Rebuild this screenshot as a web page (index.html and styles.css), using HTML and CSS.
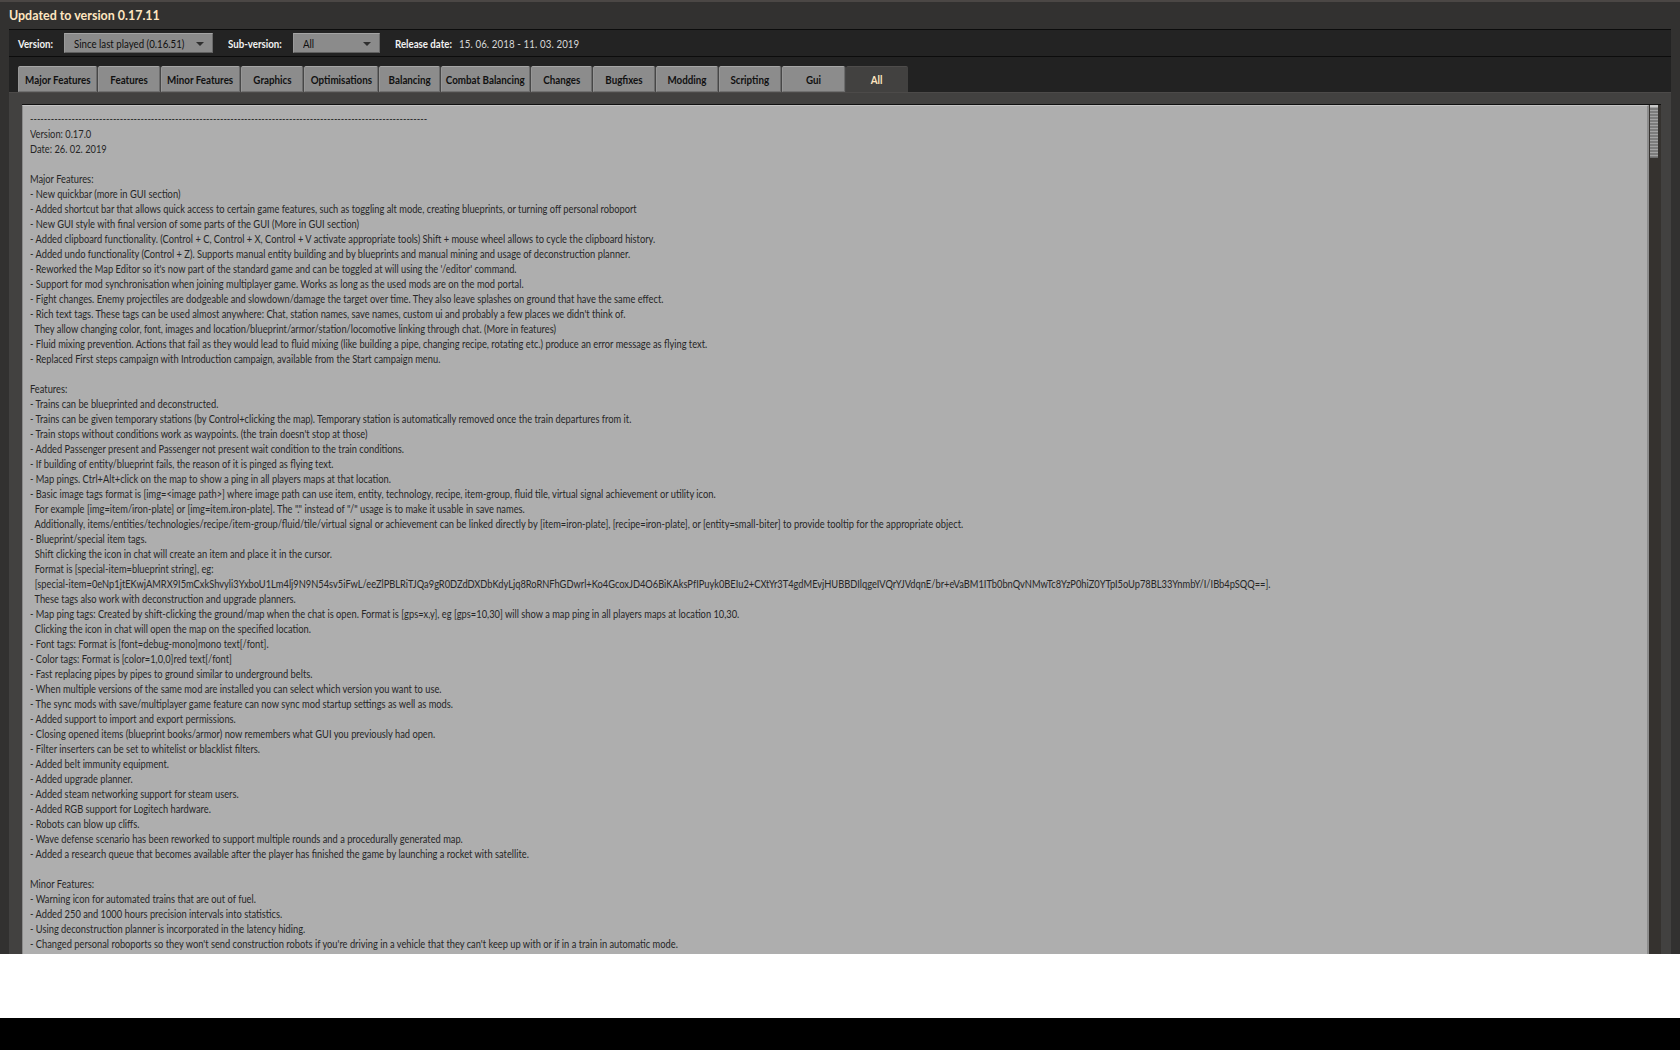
FILE: index.html
```html
<!DOCTYPE html>
<html lang="en">
<head>
<meta charset="utf-8">
<title>Updated to version 0.17.11</title>
<link rel="stylesheet" href="styles.css">
</head>
<body>
<div class="frame">
  <h1 class="title">Updated to version 0.17.11</h1>
  <div class="toolbar">
    <span class="label label-version"><span class="narrow">Version:</span></span>
    <div class="select select-version"><span class="narrow">Since last played (0.16.51)</span><i class="arrow"></i></div>
    <span class="label label-sub"><span class="narrow">Sub-version:</span></span>
    <div class="select select-sub"><span class="narrow">All</span><i class="arrow"></i></div>
    <span class="label label-date"><span class="narrow">Release date:</span></span>
    <span class="date"><span class="narrow">15. 06. 2018 - 11. 03. 2019</span></span>
  </div>
  <div class="tabs">
    <div class="tab"><span class="tab-label">Major Features</span></div>
    <div class="tab"><span class="tab-label">Features</span></div>
    <div class="tab"><span class="tab-label">Minor Features</span></div>
    <div class="tab"><span class="tab-label">Graphics</span></div>
    <div class="tab"><span class="tab-label">Optimisations</span></div>
    <div class="tab"><span class="tab-label">Balancing</span></div>
    <div class="tab"><span class="tab-label">Combat Balancing</span></div>
    <div class="tab"><span class="tab-label">Changes</span></div>
    <div class="tab"><span class="tab-label">Bugfixes</span></div>
    <div class="tab"><span class="tab-label">Modding</span></div>
    <div class="tab"><span class="tab-label">Scripting</span></div>
    <div class="tab"><span class="tab-label">Gui</span></div>
    <div class="tab tab-active"><span class="tab-label">All</span></div>
  </div>
  <div class="panel">
    <div class="textbox">
      <div class="lines">
<p>-------------------------------------------------------------------------------------------------------------------</p>
<p>Version: 0.17.0</p>
<p>Date: 26. 02. 2019</p>
<p>&nbsp;</p>
<p>Major Features:</p>
<p>- New quickbar (more in GUI section)</p>
<p>- Added shortcut bar that allows quick access to certain game features, such as toggling alt mode, creating blueprints, or turning off personal roboport</p>
<p>- New GUI style with final version of some parts of the GUI (More in GUI section)</p>
<p>- Added clipboard functionality. (Control + C, Control + X, Control + V activate appropriate tools) Shift + mouse wheel allows to cycle the clipboard history.</p>
<p>- Added undo functionality (Control + Z). Supports manual entity building and by blueprints and manual mining and usage of deconstruction planner.</p>
<p>- Reworked the Map Editor so it's now part of the standard game and can be toggled at will using the '/editor' command.</p>
<p>- Support for mod synchronisation when joining multiplayer game. Works as long as the used mods are on the mod portal.</p>
<p>- Fight changes. Enemy projectiles are dodgeable and slowdown/damage the target over time. They also leave splashes on ground that have the same effect.</p>
<p>- Rich text tags. These tags can be used almost anywhere: Chat, station names, save names, custom ui and probably a few places we didn't think of.</p>
<p>&nbsp; They allow changing color, font, images and location/blueprint/armor/station/locomotive linking through chat. (More in features)</p>
<p>- Fluid mixing prevention. Actions that fail as they would lead to fluid mixing (like building a pipe, changing recipe, rotating etc.) produce an error message as flying text.</p>
<p>- Replaced First steps campaign with Introduction campaign, available from the Start campaign menu.</p>
<p>&nbsp;</p>
<p>Features:</p>
<p>- Trains can be blueprinted and deconstructed.</p>
<p>- Trains can be given temporary stations (by Control+clicking the map). Temporary station is automatically removed once the train departures from it.</p>
<p>- Train stops without conditions work as waypoints. (the train doesn't stop at those)</p>
<p>- Added Passenger present and Passenger not present wait condition to the train conditions.</p>
<p>- If building of entity/blueprint fails, the reason of it is pinged as flying text.</p>
<p>- Map pings. Ctrl+Alt+click on the map to show a ping in all players maps at that location.</p>
<p>- Basic image tags format is [img=&lt;image path&gt;] where image path can use item, entity, technology, recipe, item-group, fluid tile, virtual signal achievement or utility icon.</p>
<p>&nbsp; For example [img=item/iron-plate] or [img=item.iron-plate]. The "." instead of "/" usage is to make it usable in save names.</p>
<p>&nbsp; Additionally, items/entities/technologies/recipe/item-group/fluid/tile/virtual signal or achievement can be linked directly by [item=iron-plate], [recipe=iron-plate], or [entity=small-biter] to provide tooltip for the appropriate object.</p>
<p>- Blueprint/special item tags.</p>
<p>&nbsp; Shift clicking the icon in chat will create an item and place it in the cursor.</p>
<p>&nbsp; Format is [special-item=blueprint string], eg:</p>
<p>&nbsp; [special-item=0eNp1jtEKwjAMRX9I5mCxkShvyli3YxboU1Lm4lj9N9N54sv5iFwL/eeZlPBLRiTJQa9gR0DZdDXDbKdyLjq8RoRNFhGDwrl+Ko4GcoxJD4O6BiKAksPfIPuyk0BEIu2+CXtYr3T4gdMEvjHUBBDIlqgeIVQrYJVdqnE/br+eVaBM1ITb0bnQvNMwTc8YzP0hiZ0YTpI5oUp78BL33YnmbY/I/IBb4pSQQ==].</p>
<p>&nbsp; These tags also work with deconstruction and upgrade planners.</p>
<p>- Map ping tags: Created by shift-clicking the ground/map when the chat is open. Format is [gps=x,y], eg [gps=10,30] will show a map ping in all players maps at location 10,30.</p>
<p>&nbsp; Clicking the icon in chat will open the map on the specified location.</p>
<p>- Font tags: Format is [font=debug-mono]mono text[/font].</p>
<p>- Color tags: Format is [color=1,0,0]red text[/font]</p>
<p>- Fast replacing pipes by pipes to ground similar to underground belts.</p>
<p>- When multiple versions of the same mod are installed you can select which version you want to use.</p>
<p>- The sync mods with save/multiplayer game feature can now sync mod startup settings as well as mods.</p>
<p>- Added support to import and export permissions.</p>
<p>- Closing opened items (blueprint books/armor) now remembers what GUI you previously had open.</p>
<p>- Filter inserters can be set to whitelist or blacklist filters.</p>
<p>- Added belt immunity equipment.</p>
<p>- Added upgrade planner.</p>
<p>- Added steam networking support for steam users.</p>
<p>- Added RGB support for Logitech hardware.</p>
<p>- Robots can blow up cliffs.</p>
<p>- Wave defense scenario has been reworked to support multiple rounds and a procedurally generated map.</p>
<p>- Added a research queue that becomes available after the player has finished the game by launching a rocket with satellite.</p>
<p>&nbsp;</p>
<p>Minor Features:</p>
<p>- Warning icon for automated trains that are out of fuel.</p>
<p>- Added 250 and 1000 hours precision intervals into statistics.</p>
<p>- Using deconstruction planner is incorporated in the latency hiding.</p>
<p>- Changed personal roboports so they won't send construction robots if you're driving in a vehicle that they can't keep up with or if in a train in automatic mode.</p>
      </div>
    </div>
    <div class="scrollbar"><div class="thumb"></div></div>
  </div>
</div>
<div class="white-strip"></div>
<div class="black-strip"></div>
</body>
</html>
```

FILE: styles.css
```css
* { box-sizing: border-box; }
html, body { margin: 0; padding: 0; background: #000; }
body { width: 1680px; height: 1050px; overflow: hidden; display: flex; flex-direction: column; font-family: "Lato", "Liberation Sans", sans-serif; }

.frame { height: 954px; overflow: hidden; display: flex; flex-direction: column; padding: 0 8px 0 9px; background: #323130; border-top: 2px solid #4b4745; }
.title { margin: 0; height: 27px; flex: none; font-size: 14px; line-height: 26px; font-weight: 700; color: #ffe6c0; transform: scaleX(.89); transform-origin: left center; }

.narrow { display: inline-block; transform: scaleX(.88); transform-origin: left center; }

.toolbar { flex: none; height: 28px; display: flex; align-items: center; background: #232323; border-top: 1px solid #0c0c0c; border-bottom: 1px solid #0c0c0c; margin-right: 1px; }
.label { font-size: 11px; font-weight: 700; color: #f2f2f2; white-space: nowrap; }
.label-version { margin-left: 9px; width: 46px; }
.label-sub { margin-left: 15px; width: 65px; }
.label-date { margin-left: 15px; width: 64px; }
.date { font-size: 11px; color: #d8d8d8; letter-spacing: .12px; white-space: nowrap; }
.select { position: relative; height: 20px; display: flex; align-items: center; padding-left: 9px; background: #8b8b8b; border-top: 1px solid #a5a5a5; border-bottom: 1px solid #5f5f5f; border-left: 1px solid #9a9a9a; border-right: 1px solid #6a6a6a; font-size: 11px; color: #0f0f0f; white-space: nowrap; }
.select-version { width: 149px; }
.select-sub { width: 87px; }
.arrow { position: absolute; right: 8px; top: 8px; width: 0; height: 0; border-left: 4px solid transparent; border-right: 4px solid transparent; border-top: 4px solid #2f2f2f; }

.tabs { flex: none; height: 35px; display: grid; grid-template-columns: 79px 62px 79px 62px 74px 61px 89px 61px 62px 62px 62px 63px 62px; column-gap: 1px; align-items: end; padding-left: 9px; background: #222; margin-right: 1px; }
.tab { height: 26px; display: flex; align-items: center; justify-content: center; background: #8c8c8c; border-top: 1px solid #a6a6a6; border-left: 1px solid #969696; border-right: 1px solid #6c6c6c; border-bottom: 1px solid #707070; border-radius: 2px 2px 0 0; box-shadow: 1px 0 0 #474747; font-size: 11px; font-weight: 700; color: #111; white-space: nowrap; }
.tab-label { display: inline-block; transform: scaleX(.89); transform-origin: center; }
.tab-active { background: #424140; border: 0; border-top: 1px solid #4e4c4b; box-shadow: none; color: #ffe6c0; }

.panel { flex: 1; min-height: 0; display: flex; margin-right: 1px; padding: 12px 10px 0 13px; background: #424140; border-top: 1px solid #4c4a49; position: relative; }
.panel::before { content: ""; position: absolute; left: 13px; right: 10px; top: 11px; height: 1px; background: #111; }
.textbox { flex: 1; min-width: 0; padding: 5px 0 0 7px; background: #aeaeae; border-top: 1px solid #c4c4c4; border-left: 1px solid #8a8a8a; border-right: 2px solid #8c8c8c; color: #262626; font-size: 11px; line-height: 15px; overflow: hidden; }
.lines { transform: scaleX(.845); transform-origin: left top; width: 1800px; }
.lines p { margin: 0; height: 15px; white-space: pre; }
.scrollbar { flex: none; width: 12px; background: #35322f; padding-left: 1px; }
.thumb { width: 8px; height: 53px; background: repeating-linear-gradient(#a2a2a2 0 1px, #7c7c7c 1px 3px); border-top: 2px solid #c8c8c8; border-bottom: 1px solid #6a6a6a; }

.white-strip { flex: none; height: 64px; background: #fff; }
.black-strip { flex: 1; background: #000; }
```
